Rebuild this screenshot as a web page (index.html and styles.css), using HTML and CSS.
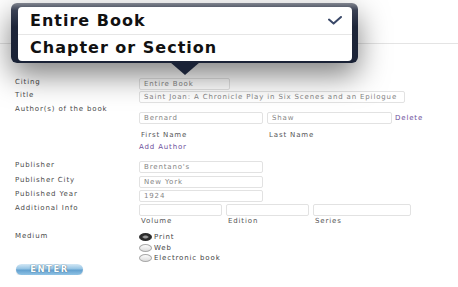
FILE: index.html
```html
<!DOCTYPE html>
<html lang="en">

<head>
    <meta charset="UTF-8">
    <meta name="viewport" content="width=device-width, initial-scale=1.0">
    <title>Cite a Book</title>
    <link rel="stylesheet" href="styles.css">
</head>

<body>
    <div class="topbar"></div>

    <!-- Citing type picker -->
    <div class="popover">
        <div class="popover-list">
            <div class="option">
                <span>Entire Book</span>
                <svg class="check" width="14" height="9" viewBox="0 0 14 9">
                    <polyline points="1,3.6 5.6,7.6 13,1" fill="none" stroke="#3a4868" stroke-width="2" stroke-linecap="round" stroke-linejoin="round"/>
                </svg>
            </div>
            <div class="option">
                <span>Chapter or Section</span>
            </div>
        </div>
        <div class="popover-arrow"></div>
    </div>

    <form class="form">
        <div class="row row-citing">
            <label class="label">Citing</label>
            <input class="field w-citing" value="Entire Book">
        </div>

        <div class="row row-title">
            <label class="label">Title</label>
            <input class="field w-title" value="Saint Joan: A Chronicle Play in Six Scenes and an Epilogue">
        </div>

        <div class="row row-author">
            <label class="label">Author(s) of the book</label>
            <div class="author">
                <div class="pair">
                    <input class="field w-first" value="Bernard">
                    <input class="field w-last" value="Shaw">
                    <a class="link delete" href="#">Delete</a>
                </div>
                <div class="pair sublabels">
                    <span class="w-first">First Name</span>
                    <span class="w-last">Last Name</span>
                </div>
                <a class="link add" href="#">Add Author</a>
            </div>
        </div>

        <div class="row row-pub">
            <label class="label">Publisher</label>
            <input class="field w-pub" value="Brentano's">
        </div>

        <div class="row row-city">
            <label class="label">Publisher City</label>
            <input class="field w-pub" value="New York">
        </div>

        <div class="row row-year">
            <label class="label">Published Year</label>
            <input class="field w-pub" value="1924">
        </div>

        <div class="row row-info">
            <label class="label">Additional Info</label>
            <div>
                <div class="pair">
                    <input class="field w-vol">
                    <input class="field w-vol">
                    <input class="field w-series">
                </div>
                <div class="pair sublabels sub-info">
                    <span class="w-vol">Volume</span>
                    <span class="w-vol">Edition</span>
                    <span class="w-series">Series</span>
                </div>
            </div>
        </div>

        <div class="row row-medium">
            <label class="label">Medium</label>
            <div class="radios">
                <div class="radio-line"><span class="radio checked"></span>Print</div>
                <div class="radio-line"><span class="radio"></span>Web</div>
                <div class="radio-line"><span class="radio"></span>Electronic book</div>
            </div>
        </div>

        <button class="enter-btn" type="button">ENTER</button>
    </form>
</body>

</html>
```

FILE: styles.css
```css
body {
    font-family: "DejaVu Sans", Verdana, sans-serif;
    font-size: 7px;
    letter-spacing: 0.85px;
    color: #555;
    background: #fff;
    margin: 0;
    overflow: hidden;
}

.topbar {
    height: 43px;
    border-bottom: 1px solid #e4e4e4;
}

/* Popover */
.popover {
    position: absolute;
    left: 11px;
    top: 3px;
    width: 347px;
    height: 60px;
    box-sizing: border-box;
    padding: 4px 6px 2px 7px;
    border-radius: 6px;
    background: linear-gradient(#80848e 0%, #3a4154 12%, #1d2539 40%, #1a2236 100%);
    box-shadow: 0 12px 30px rgba(0, 0, 0, 0.5);
    z-index: 2;
}

.popover-list {
    background: #fff;
    border-radius: 4px;
    height: 100%;
    display: flex;
    flex-direction: column;
    overflow: hidden;
}

.option {
    flex: 1;
    display: flex;
    align-items: center;
    justify-content: space-between;
    padding: 0 10px 0 12px;
    font-size: 16px;
    font-weight: bold;
    letter-spacing: 1px;
    color: #111;
}

.option + .option {
    border-top: 1px solid #e6e6e6;
}

.check {
    display: block;
}

.popover-arrow {
    position: absolute;
    left: 159px;
    top: 59px;
    width: 0;
    height: 0;
    border-left: 15px solid transparent;
    border-right: 15px solid transparent;
    border-top: 13px solid #1a2236;
}

/* Form */
.form {
    padding: 34px 0 0 15px;
}

.row {
    display: flex;
    align-items: flex-start;
}

.label {
    width: 124px;
    flex: none;
    line-height: 8px;
    color: #4a4a4a;
}

.field {
    box-sizing: border-box;
    height: 12px;
    margin: 0;
    padding: 0 4px;
    border: 1px solid #e2e2e2;
    border-radius: 2px;
    font-family: "DejaVu Sans", Verdana, sans-serif;
    font-size: 7px;
    letter-spacing: 0.85px;
    color: #858585;
    background: #fff;
    outline: none;
}

.w-citing { width: 91px; }
.w-title { width: 266px; }
.w-first { width: 124px; }
.w-last { width: 125px; }
.w-pub { width: 124px; }
.w-vol { width: 83px; }
.w-series { width: 98px; }

.row-citing { margin-bottom: 1px; }
.row-title { margin-bottom: 2px; }
.row-author { margin-bottom: 10px; }
.row-pub { margin-bottom: 3px; }
.row-city { margin-bottom: 2px; }
.row-year { margin-bottom: 2px; }
.row-info { margin-bottom: 7px; }

.author {
    padding-top: 7px;
}

.pair {
    display: flex;
    align-items: center;
    gap: 4px;
}

.sublabels {
    margin-top: 7px;
    line-height: 8px;
    color: #555;
}

.sublabels span {
    padding-left: 2px;
    box-sizing: border-box;
}

.sub-info {
    margin-top: 1px;
}

.link {
    color: #6d4f9c;
    text-decoration: none;
    line-height: 8px;
}

.delete {
    margin-left: -1px;
}

.add {
    display: block;
    margin-top: 4px;
}

/* Medium radios */
.radios {
    display: flex;
    flex-direction: column;
}

.radio-line {
    display: flex;
    align-items: center;
    gap: 2px;
    height: 10.5px;
    color: #444;
}

.radio {
    display: inline-block;
    box-sizing: border-box;
    width: 13px;
    height: 8px;
    border-radius: 50%;
    border: 1px solid #a9a9a9;
    background: linear-gradient(#fdfdfd, #dcdcdc);
}

.radio.checked {
    border-color: #2a2a2a;
    background: radial-gradient(ellipse at center, #9a9a9a 0 25%, #2c2c2c 45%);
}

.enter-btn {
    display: block;
    margin: 0 0 0 1px;
    width: 67px;
    height: 11px;
    padding: 0;
    border: none;
    border-radius: 6px;
    background: linear-gradient(#d4e8f5 0%, #93c3e4 45%, #62a0cf 55%, #90c3e5 100%);
    font-family: "DejaVu Sans", Verdana, sans-serif;
    font-size: 8.5px;
    font-weight: bold;
    letter-spacing: 1.5px;
    line-height: 11px;
    color: #fff;
    text-shadow: 0 0 1px #4a7088, 0 0 1px #4a7088;
    box-shadow: 0 1px 1px rgba(0, 0, 0, 0.15);
}
```
